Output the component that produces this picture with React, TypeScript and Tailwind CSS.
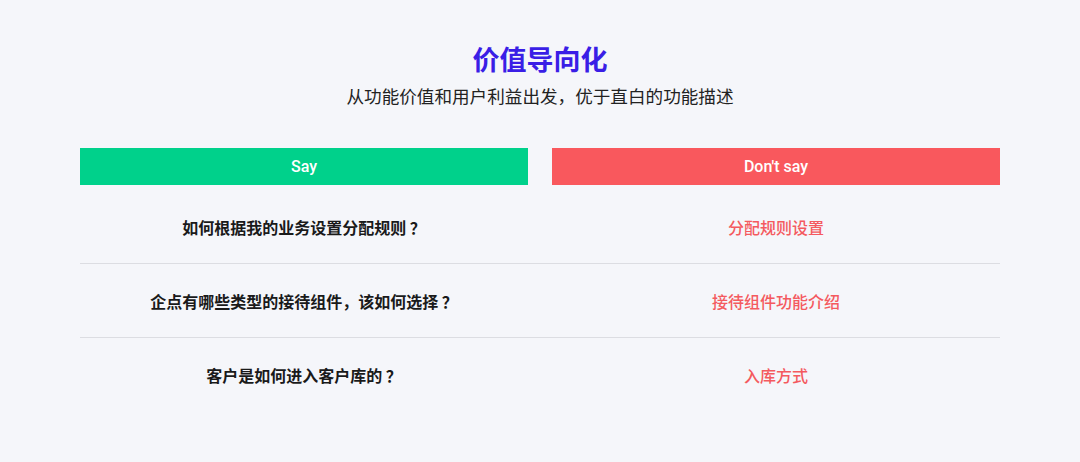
import React from 'react';

const rows = [
  { say: '如何根据我的业务设置分配规则 ？', dont: '分配规则设置' },
  { say: '企点有哪些类型的接待组件，该如何选择 ？', dont: '接待组件功能介绍' },
  { say: '客户是如何进入客户库的 ？', dont: '入库方式' },
];

const App: React.FC = () => {
  return (
    <div
      className="w-[1080px] h-[462px] bg-[#f5f6fa] flex flex-col items-center"
      style={{ fontFamily: '"Noto Sans CJK SC", "Noto Sans", sans-serif' }}
    >
      {/* Heading */}
      <h1 className="mt-[41px] text-[27px] leading-[36px] font-bold text-[#3a1ee6]">价值导向化</h1>
      <p className="mt-[7px] text-[17.6px] leading-[24px] text-[#222222]">从功能价值和用户利益出发，优于直白的功能描述</p>

      {/* Table */}
      <div className="mt-[40px] w-[920px]">
        <div className="flex gap-[24px] font-['Roboto',sans-serif]">
          <div className="flex-1 h-[37px] bg-[#00d18b] flex items-center justify-center text-white text-[16px] font-medium">
            Say
          </div>
          <div className="flex-1 h-[37px] bg-[#f9585d] flex items-center justify-center text-white text-[16px] font-medium">
            Don't say
          </div>
        </div>
        <div className="mt-[5px]">
          {rows.map((r, i) => (
            <div
              key={r.dont}
              className={`flex gap-[24px] h-[74px] items-center ${i < rows.length - 1 ? 'border-b border-[#dcdde2]' : ''}`}
            >
              <div className="flex-1 text-center text-[16px] font-bold text-[#1a1a1a]">{r.say}</div>
              <div className="flex-1 text-center text-[16px] font-medium text-[#f45a5f]">{r.dont}</div>
            </div>
          ))}
        </div>
      </div>
    </div>
  );
};

export default App;
